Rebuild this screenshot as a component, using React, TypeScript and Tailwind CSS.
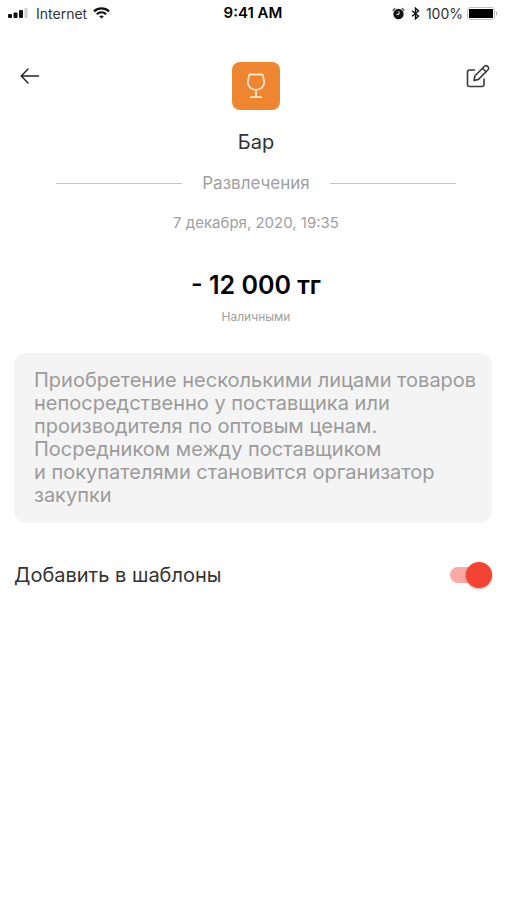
import { useState } from "react";

function SignalIcon() {
  return (
    <svg width="20" height="12" viewBox="0 0 20 12" aria-hidden="true">
      <rect x="0" y="7" width="4" height="4" rx="1" fill="#111" />
      <rect x="5.5" y="5.5" width="4" height="5.5" rx="1" fill="#111" />
      <rect x="11" y="3" width="4" height="8" rx="1" fill="#111" />
      <rect x="16.5" y="1" width="3" height="10" rx="1" fill="#d0d0d0" />
    </svg>
  );
}

function WifiIcon() {
  return (
    <svg width="17" height="12" viewBox="0 0 17 12" fill="none" stroke="#111" strokeWidth="2.2" aria-hidden="true">
      <path d="M1 4.4C5.2.4 11.8.4 16 4.4" />
      <path d="M3.8 7.3c2.7-2.5 6.7-2.5 9.4 0" />
      <path d="M8.5 11.6 6.2 9.4c1.3-1.2 3.3-1.2 4.6 0z" fill="#111" stroke="none" />
    </svg>
  );
}

function AlarmIcon() {
  return (
    <svg width="13" height="13" viewBox="0 0 13 13" fill="none" aria-hidden="true">
      <circle cx="6.5" cy="7" r="5.2" fill="#111" />
      <path d="M1 3.2 2.800 1.500M12 3.200 10.200 1.500" stroke="#555" strokeWidth="1.400" strokeLinecap="round" />
      <path d="M7 4.200V7.400H4.500" stroke="#fff" strokeWidth="1" />
    </svg>
  );
}

function BluetoothIcon() {
  return (
    <svg width="9" height="13" viewBox="0 0 9 13" fill="none" aria-hidden="true">
      <path d="M1 3.800 7.500 9 4.500 11.800V1.200L7.500 4 1 9.200" stroke="#111" strokeWidth="1.400" />
    </svg>
  );
}

function BatteryIcon() {
  return (
    <svg width="31" height="13" viewBox="0 0 31 13" fill="none" aria-hidden="true">
      <rect x=".5" y=".5" width="27" height="12" rx="2.500" stroke="#c4c4c4" />
      <rect x="2" y="2" width="24" height="9" fill="#000" />
      <path d="M29 4.500c1.500.6 1.500 3.400 0 4z" fill="#aaa" />
    </svg>
  );
}

function BackIcon() {
  return (
    <svg width="20" height="18" viewBox="0 0 20 18" fill="none" stroke="#222" strokeWidth="1.400" strokeLinecap="round" strokeLinejoin="round" aria-hidden="true">
      <path d="M18.500 9H1.200M8 2 1.200 9l6.800 7" />
    </svg>
  );
}

function EditIcon() {
  return (
    <svg width="24" height="24" viewBox="0 0 24 24" fill="none" stroke="#3a3a3a" strokeWidth="1.600" strokeLinecap="round" strokeLinejoin="round" aria-hidden="true">
      <path d="M8.500 6H3.500a2 2 0 0 0-2 2v12.500a2 2 0 0 0 2 2H16a2 2 0 0 0 2-2v-5.500" />
      <path d="M8 16.500l.9-4.500L18.500 2.300a2.500 2.500 0 0 1 3.500 3.500L12.500 15.400z" />
      <path d="M16.500 4.300l3.500 3.500" />
    </svg>
  );
}

function GlassIcon() {
  return (
    <svg width="20" height="26" viewBox="0 0 20 26" fill="none" stroke="#fde6cf" strokeWidth="1.800" strokeLinecap="round" strokeLinejoin="round" aria-hidden="true">
      <path d="M3.500 1.500H16.500L18.200 8.500C18.600 13 15 16.800 10 16.800S1.400 13 1.800 8.500Z" />
      <path d="M10 16.800V24M5 24.200H15" />
    </svg>
  );
}

function StatusBar() {
  return (
    <div className="grid h-[26px] grid-cols-[1fr_auto_1fr] items-center px-2 text-[14px] text-[#333]">
      <div className="flex items-center gap-2">
        <SignalIcon />
        <div className="flex items-center gap-1.5">
          <span>Internet</span>
          <WifiIcon />
        </div>
      </div>
      <span className="text-[15px] font-semibold text-black">9:41 AM</span>
      <div className="flex items-center justify-end gap-1.5">
        <AlarmIcon />
        <BluetoothIcon />
        <div className="flex items-center gap-1">
          <span>100%</span>
          <BatteryIcon />
        </div>
      </div>
    </div>
  );
}

export default function App() {
  const [isTemplate, setIsTemplate] = useState(true);

  return (
    <div className="min-h-screen bg-white font-['Inter',sans-serif] text-[#333]">
      <StatusBar />

      <main className="px-3.5">
        <header className="flex items-start justify-between pt-9 pl-1.5">
          <button type="button" aria-label="Назад" className="flex h-7 w-[26px] items-center">
            <BackIcon />
          </button>
          <div className="flex flex-col items-center gap-5">
            <div className="flex size-12 items-center justify-center rounded-lg bg-[#ee8530]">
              <GlassIcon />
            </div>
            <h1 className="text-[20px] leading-6">Бар</h1>
          </div>
          <button type="button" aria-label="Редактировать" className="flex h-7 w-[26px] items-center">
            <EditIcon />
          </button>
        </header>

        <section className="flex flex-col items-center pt-[17px] pl-1.5 text-[#a0a0a0]">
          <div className="flex w-full items-center gap-5 px-9">
            <span className="h-px flex-1 bg-[#c8c8c8]" />
            <p className="text-[17px] leading-6">Развлечения</p>
            <span className="h-px flex-1 bg-[#c8c8c8]" />
          </div>
          <p className="pt-4 text-[15px] leading-6">7 декабря, 2020, 19:35</p>
          <p className="pt-[34px] text-[25px] leading-8 font-semibold text-black">- 12 000 тг</p>
          <p className="pt-2 text-[12px] leading-4">Наличными</p>
        </section>

        <p className="mt-7 rounded-xl bg-[#f4f4f4] py-4 pr-3 pl-5 text-[20px] leading-[23px] text-[#9b9b9b]">
          Приобретение несколькими лицами товаров непосредственно у поставщика или производителя по оптовым ценам.
          <br />
          Посредником между поставщиком
          <br />
          и покупателями становится организатор закупки
        </p>

        <div className="flex items-center justify-between pt-9">
          <label htmlFor="template" className="text-[20px] leading-8">
            Добавить в шаблоны
          </label>
          <span className="relative flex h-8 w-[42px] items-center">
            <input
              id="template"
              type="checkbox"
              role="switch"
              checked={isTemplate}
              onChange={(event) => setIsTemplate(event.target.checked)}
              className="peer h-4 w-full cursor-pointer appearance-none rounded-full bg-gray-300 checked:bg-[#faa9a4]"
            />
            <span className="pointer-events-none absolute left-0 size-[26px] rounded-full bg-white shadow-[0_1px_3px_rgba(0,0,0,0.35)] peer-checked:right-0 peer-checked:left-auto peer-checked:bg-[#f24333]" />
          </span>
        </div>
      </main>
    </div>
  );
}
